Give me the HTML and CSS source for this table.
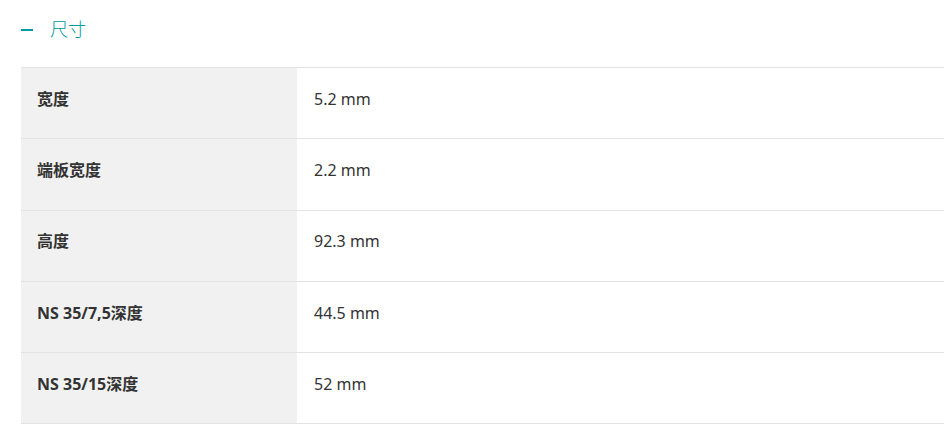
FILE: index.html
```html
<!DOCTYPE html>
<html lang="zh">
<head>
<meta charset="utf-8">
<link rel="stylesheet" href="styles.css">
</head>
<body>
<div class="section">
  <div class="section-head">
    <span class="dash"></span>
    <span class="title">尺寸</span>
  </div>
  <table class="specs">
    <tr><th>宽度</th><td>5.2 mm</td></tr>
    <tr><th>端板宽度</th><td>2.2 mm</td></tr>
    <tr><th>高度</th><td>92.3 mm</td></tr>
    <tr><th>NS 35/7,5深度</th><td>44.5 mm</td></tr>
    <tr><th>NS 35/15深度</th><td>52 mm</td></tr>
  </table>
</div>
</body>
</html>
```
FILE: styles.css
```css
html, body {
  margin: 0;
  padding: 0;
  background: #fff;
}
body {
  font-family: "Noto Sans", "Noto Sans CJK SC", sans-serif;
  color: #333;
}
.section {
  padding: 0 8px 0 21px;
}
.section-head {
  display: flex;
  align-items: center;
  height: 56px;
}
.dash {
  width: 12px;
  height: 2px;
  background: #0098a1;
  margin-right: 17px;
  margin-top: 3px;
}
.title {
  font-family: "Noto Sans CJK SC", sans-serif;
  font-weight: 300;
  font-size: 18px;
  color: #0098a1;
}
.specs {
  width: 100%;
  border-collapse: collapse;
  margin-top: 11px;
  font-size: 16px;
}
.specs tr {
  border-top: 1px solid #e3e3e3;
  border-bottom: 1px solid #e3e3e3;
}
.specs th, .specs td {
  height: 71.3px;
  padding: 0 16px;
  text-align: left;
  vertical-align: middle;
  line-height: 22px;
  padding-bottom: 9px;
  box-sizing: border-box;
}
.specs th {
  width: 276px;
  background: #f1f1f1;
  font-weight: 700;
  font-family: "Noto Sans", "Noto Sans CJK SC", sans-serif;
}
.specs td {
  font-weight: 400;
  padding-left: 17px;
}
```
